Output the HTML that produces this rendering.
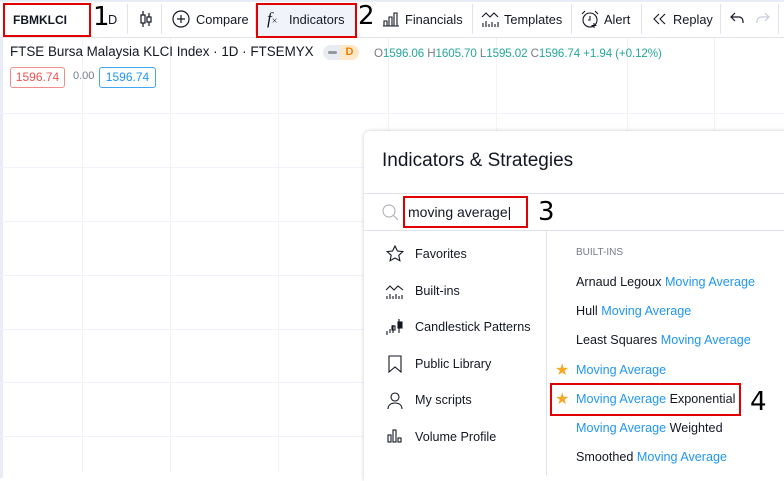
<!DOCTYPE html>
<html><head><meta charset="utf-8"><style>
*{margin:0;padding:0;box-sizing:border-box}
body{width:784px;height:478px;overflow:hidden;background:#fff;font-family:"Liberation Sans","DejaVu Sans",sans-serif;position:relative;color:#131722}
.a{position:absolute;white-space:nowrap}
.vl{position:absolute;width:1px;background:#f0f3fa}
.hl{position:absolute;height:1px;background:#f0f3fa}
.sep{position:absolute;top:4px;width:1px;height:30px;background:#e0e3eb}
.tb{font-size:12.8px;top:12px}
.red{position:absolute;border:2px solid #e00000}
.num{position:absolute;font-size:26px;color:#000;font-family:"DejaVu Sans",sans-serif}
.g{color:#26a69a}
.li{font-size:12.6px;color:#131722}
.bl{color:#2196f3}
</style></head><body>
<div class="a" style="left:0;top:38px;width:3px;height:440px;background:#e8ecf5"></div>
<div class="vl" style="left:82px;top:38px;height:434px"></div>
<div class="vl" style="left:170px;top:38px;height:434px"></div>
<div class="vl" style="left:278px;top:38px;height:434px"></div>
<div class="vl" style="left:388px;top:38px;height:434px"></div>
<div class="vl" style="left:496px;top:38px;height:100px"></div>
<div class="vl" style="left:627px;top:38px;height:100px"></div>
<div class="vl" style="left:714px;top:38px;height:100px"></div>
<div class="hl" style="left:0;top:113px;width:784px"></div>
<div class="hl" style="left:0;top:167px;width:364px"></div>
<div class="hl" style="left:0;top:221px;width:364px"></div>
<div class="hl" style="left:0;top:275px;width:364px"></div>
<div class="hl" style="left:0;top:329px;width:364px"></div>
<div class="hl" style="left:0;top:382px;width:364px"></div>
<div class="hl" style="left:0;top:436px;width:364px"></div>

<div class="a" style="left:0;top:0;width:784px;height:2px;background:#e8ecf5"></div>
<div class="a" style="left:0;top:37px;width:784px;height:1px;background:#e0e3eb"></div>
<div class="a tb" style="left:13px;font-weight:bold;font-size:12px;top:13px">FBMKLCI</div>
<div class="red" style="left:3px;top:3px;width:88px;height:34px"></div>
<div class="num" style="left:93px;top:2px">1</div>
<div class="a tb" style="left:108px">D</div>
<div class="sep" style="left:127px"></div>
<svg class="a" style="left:139px;top:10px" width="14" height="18" viewBox="0 0 14 18" fill="none" stroke="#131722" stroke-width="1.2"><path d="M4 1v16M10 3v13"/><rect x="2" y="5" width="4" height="8" fill="#fff"/><rect x="8" y="7" width="4" height="5" fill="#fff"/></svg>
<div class="sep" style="left:161px"></div>
<svg class="a" style="left:172px;top:10px" width="18" height="18" viewBox="0 0 18 18" fill="none" stroke="#131722" stroke-width="1.2"><circle cx="9" cy="9" r="8"/><path d="M9 5v8M5 9h8"/></svg>
<div class="a tb" style="left:196px">Compare</div>
<div class="sep" style="left:255px"></div>
<div class="a" style="left:256px;top:3px;width:100px;height:34px;background:#f0f3fa"></div>
<div class="red" style="left:256px;top:3px;width:101px;height:35px"></div>
<div class="a" style="left:267px;top:9px;font-family:'Liberation Serif',serif;font-style:italic;font-size:17px">f<span style="font-size:10px;font-style:normal">×</span></div>
<div class="a tb" style="left:289px">Indicators</div>
<div class="num" style="left:358px;top:1px">2</div>
<svg class="a" style="left:382px;top:11px" width="18" height="16" viewBox="0 0 18 16" fill="none" stroke="#131722" stroke-width="1.1"><path d="M1 15h16M2 15V10h3v5M7 15V6h3v9M12 15V2h3v13"/></svg>
<div class="a tb" style="left:405px">Financials</div>
<div class="sep" style="left:472px"></div>
<svg class="a" style="left:481px;top:10px" width="18" height="18" viewBox="0 0 18 18" fill="none" stroke="#131722" stroke-width="1.1"><path d="M1 7l4-4 4 4 4-4 4 4M2 17v-4M5 17v-6M8 17v-3M11 17v-5M14 17v-3M17 17v-5"/></svg>
<div class="a tb" style="left:504px">Templates</div>
<div class="sep" style="left:571px"></div>
<svg class="a" style="left:580px;top:9px" width="20" height="20" viewBox="0 0 20 20" fill="none" stroke="#131722" stroke-width="1.1"><circle cx="10" cy="11" r="7"/><path d="M2 5l3-3M18 5l-3-3M10 7v4h-2M14 14v5M11.5 16.5h5"/></svg>
<div class="a tb" style="left:604px">Alert</div>
<div class="sep" style="left:641px"></div>
<svg class="a" style="left:653px;top:12px" width="14" height="14" viewBox="0 0 14 14" fill="none" stroke="#131722" stroke-width="1.1"><path d="M6 2L1 7l5 5M12 2L7 7l5 5"/></svg>
<div class="a tb" style="left:673px">Replay</div>
<div class="sep" style="left:720px"></div>
<svg class="a" style="left:730px;top:12px" width="14" height="12" viewBox="0 0 14 12" fill="none" stroke="#131722" stroke-width="1.2"><path d="M5 1L1 5l4 4M1 5h8a4 4 0 014 4v2"/></svg>
<svg class="a" style="left:756px;top:12px" width="14" height="12" viewBox="0 0 14 12" fill="none" stroke="#c8ccd6" stroke-width="1.2"><path d="M9 1l4 4-4 4M13 5H5a4 4 0 00-4 4v2"/></svg>
<div class="sep" style="left:778px"></div>

<div class="a" style="left:10px;top:44px;font-size:13.4px">FTSE Bursa Malaysia KLCI Index · 1D · FTSEMYX</div>
<div class="a" style="left:323px;top:45px;width:36px;height:15px;border-radius:8px;background:#e8ecf0"></div>
<div class="a" style="left:340px;top:45px;width:19px;height:15px;border-radius:0 8px 8px 0;background:#fde9c8;color:#f57c00;font-size:11px;font-weight:bold;text-align:center;line-height:15px">D</div>
<div class="a" style="left:328px;top:51px;width:9px;height:3px;background:#9598a1;border-radius:2px"></div>
<div class="a" style="left:374px;top:47px;font-size:11.6px;color:#787b86;letter-spacing:-0.1px">O<span class="g">1596.06</span> H<span class="g">1605.70</span> L<span class="g">1595.02</span> C<span class="g">1596.74</span> <span class="g">+1.94 (+0.12%)</span></div>
<div class="a" style="left:10px;top:67px;width:55px;height:21px;border:1px solid #f28b8b;border-radius:3px;color:#ef5350;font-size:12px;text-align:center;line-height:19px">1596.74</div>
<div class="a" style="left:73px;top:70px;font-size:11px;color:#787b86">0.00</div>
<div class="a" style="left:99px;top:67px;width:57px;height:21px;border:1px solid #42a5f5;border-radius:3px;color:#2196f3;font-size:12px;text-align:center;line-height:19px">1596.74</div>

<div class="a" style="left:364px;top:131px;width:430px;height:350px;background:#fff;border-radius:6px 0 0 0;box-shadow:0 0 4px rgba(0,0,0,.2)"></div>
<div class="a" style="left:382px;top:150px;font-size:19px;color:#131722">Indicators &amp; Strategies</div>
<div class="a" style="left:364px;top:193px;width:420px;height:1px;background:#e0e3eb"></div>
<svg class="a" style="left:382px;top:204px" width="17" height="17" viewBox="0 0 17 17" fill="none" stroke="#b2b5be" stroke-width="1.2"><circle cx="7" cy="7" r="6"/><path d="M11.5 11.5L16 16"/></svg>
<div class="a" style="left:408px;top:204px;font-size:14px">moving average|</div>
<div class="red" style="left:403px;top:196px;width:125px;height:32px"></div>
<div class="num" style="left:538px;top:197px">3</div>
<div class="a" style="left:364px;top:230px;width:420px;height:1px;background:#e0e3eb"></div>
<div class="a" style="left:546px;top:231px;width:1px;height:245px;background:#e0e3eb"></div>

<svg class="a" style="left:386px;top:245px" width="18" height="18" viewBox="0 0 18 18" fill="none" stroke="#131722" stroke-width="1.1"><path d="M9 1l2.4 5 5.4.6-4 3.7 1.1 5.4L9 13l-4.9 2.7 1.1-5.4-4-3.7 5.4-.6z"/></svg>
<div class="a li" style="left:415px;top:247px">Favorites</div>
<svg class="a" style="left:385px;top:284px" width="20" height="16" viewBox="0 0 20 16" fill="none" stroke="#131722" stroke-width="1.1"><path d="M1 6l4-4 4 4 4-4 5 4M2 15v-3M5 15v-5M8 15v-3M11 15v-5M14 15v-3M17 15v-4"/></svg>
<div class="a li" style="left:415px;top:284px">Built-ins</div>
<svg class="a" style="left:386px;top:318px" width="18" height="18" viewBox="0 0 18 18" fill="none" stroke="#131722" stroke-width="1.1"><path d="M1 17v-4M4 15v-4M7 7v8M13 1v14"/><rect x="6" y="8" width="3" height="4"/><rect x="12" y="4" width="4" height="6" fill="#131722"/></svg>
<div class="a li" style="left:415px;top:320px">Candlestick Patterns</div>
<svg class="a" style="left:388px;top:355px" width="14" height="18" viewBox="0 0 14 18" fill="none" stroke="#131722" stroke-width="1.1"><path d="M1 1h12v16l-6-5-6 5z"/></svg>
<div class="a li" style="left:415px;top:357px">Public Library</div>
<svg class="a" style="left:387px;top:392px" width="16" height="18" viewBox="0 0 16 18" fill="none" stroke="#131722" stroke-width="1.1"><circle cx="8" cy="5" r="4"/><path d="M1 17c0-4 3-6 7-6s7 2 7 6"/></svg>
<div class="a li" style="left:415px;top:393px">My scripts</div>
<svg class="a" style="left:387px;top:429px" width="16" height="14" viewBox="0 0 16 14" fill="none" stroke="#131722" stroke-width="1.1"><rect x="1" y="6" width="3" height="7"/><rect x="6" y="1" width="3" height="12"/><rect x="11" y="9" width="3" height="4"/></svg>
<div class="a li" style="left:415px;top:430px">Volume Profile</div>

<div class="a" style="left:576px;top:247px;font-size:10px;color:#787b86">BUILT-INS</div>
<div class="a li" style="left:576px;top:275px">Arnaud Legoux <span class="bl">Moving Average</span></div>
<div class="a li" style="left:576px;top:304px">Hull <span class="bl">Moving Average</span></div>
<div class="a li" style="left:576px;top:333px">Least Squares <span class="bl">Moving Average</span></div>
<div class="a" style="left:555px;top:360px;color:#f9a825;font-size:16px">★</div>
<div class="a li" style="left:576px;top:363px"><span class="bl">Moving Average</span></div>
<div class="a" style="left:555px;top:389px;color:#f9a825;font-size:16px">★</div>
<div class="a li" style="left:576px;top:392px"><span class="bl">Moving Average</span> Exponential</div>
<div class="red" style="left:550px;top:383px;width:191px;height:33px"></div>
<div class="num" style="left:750px;top:387px">4</div>
<div class="a li" style="left:576px;top:421px"><span class="bl">Moving Average</span> Weighted</div>
<div class="a li" style="left:576px;top:450px">Smoothed <span class="bl">Moving Average</span></div>
</body></html>
